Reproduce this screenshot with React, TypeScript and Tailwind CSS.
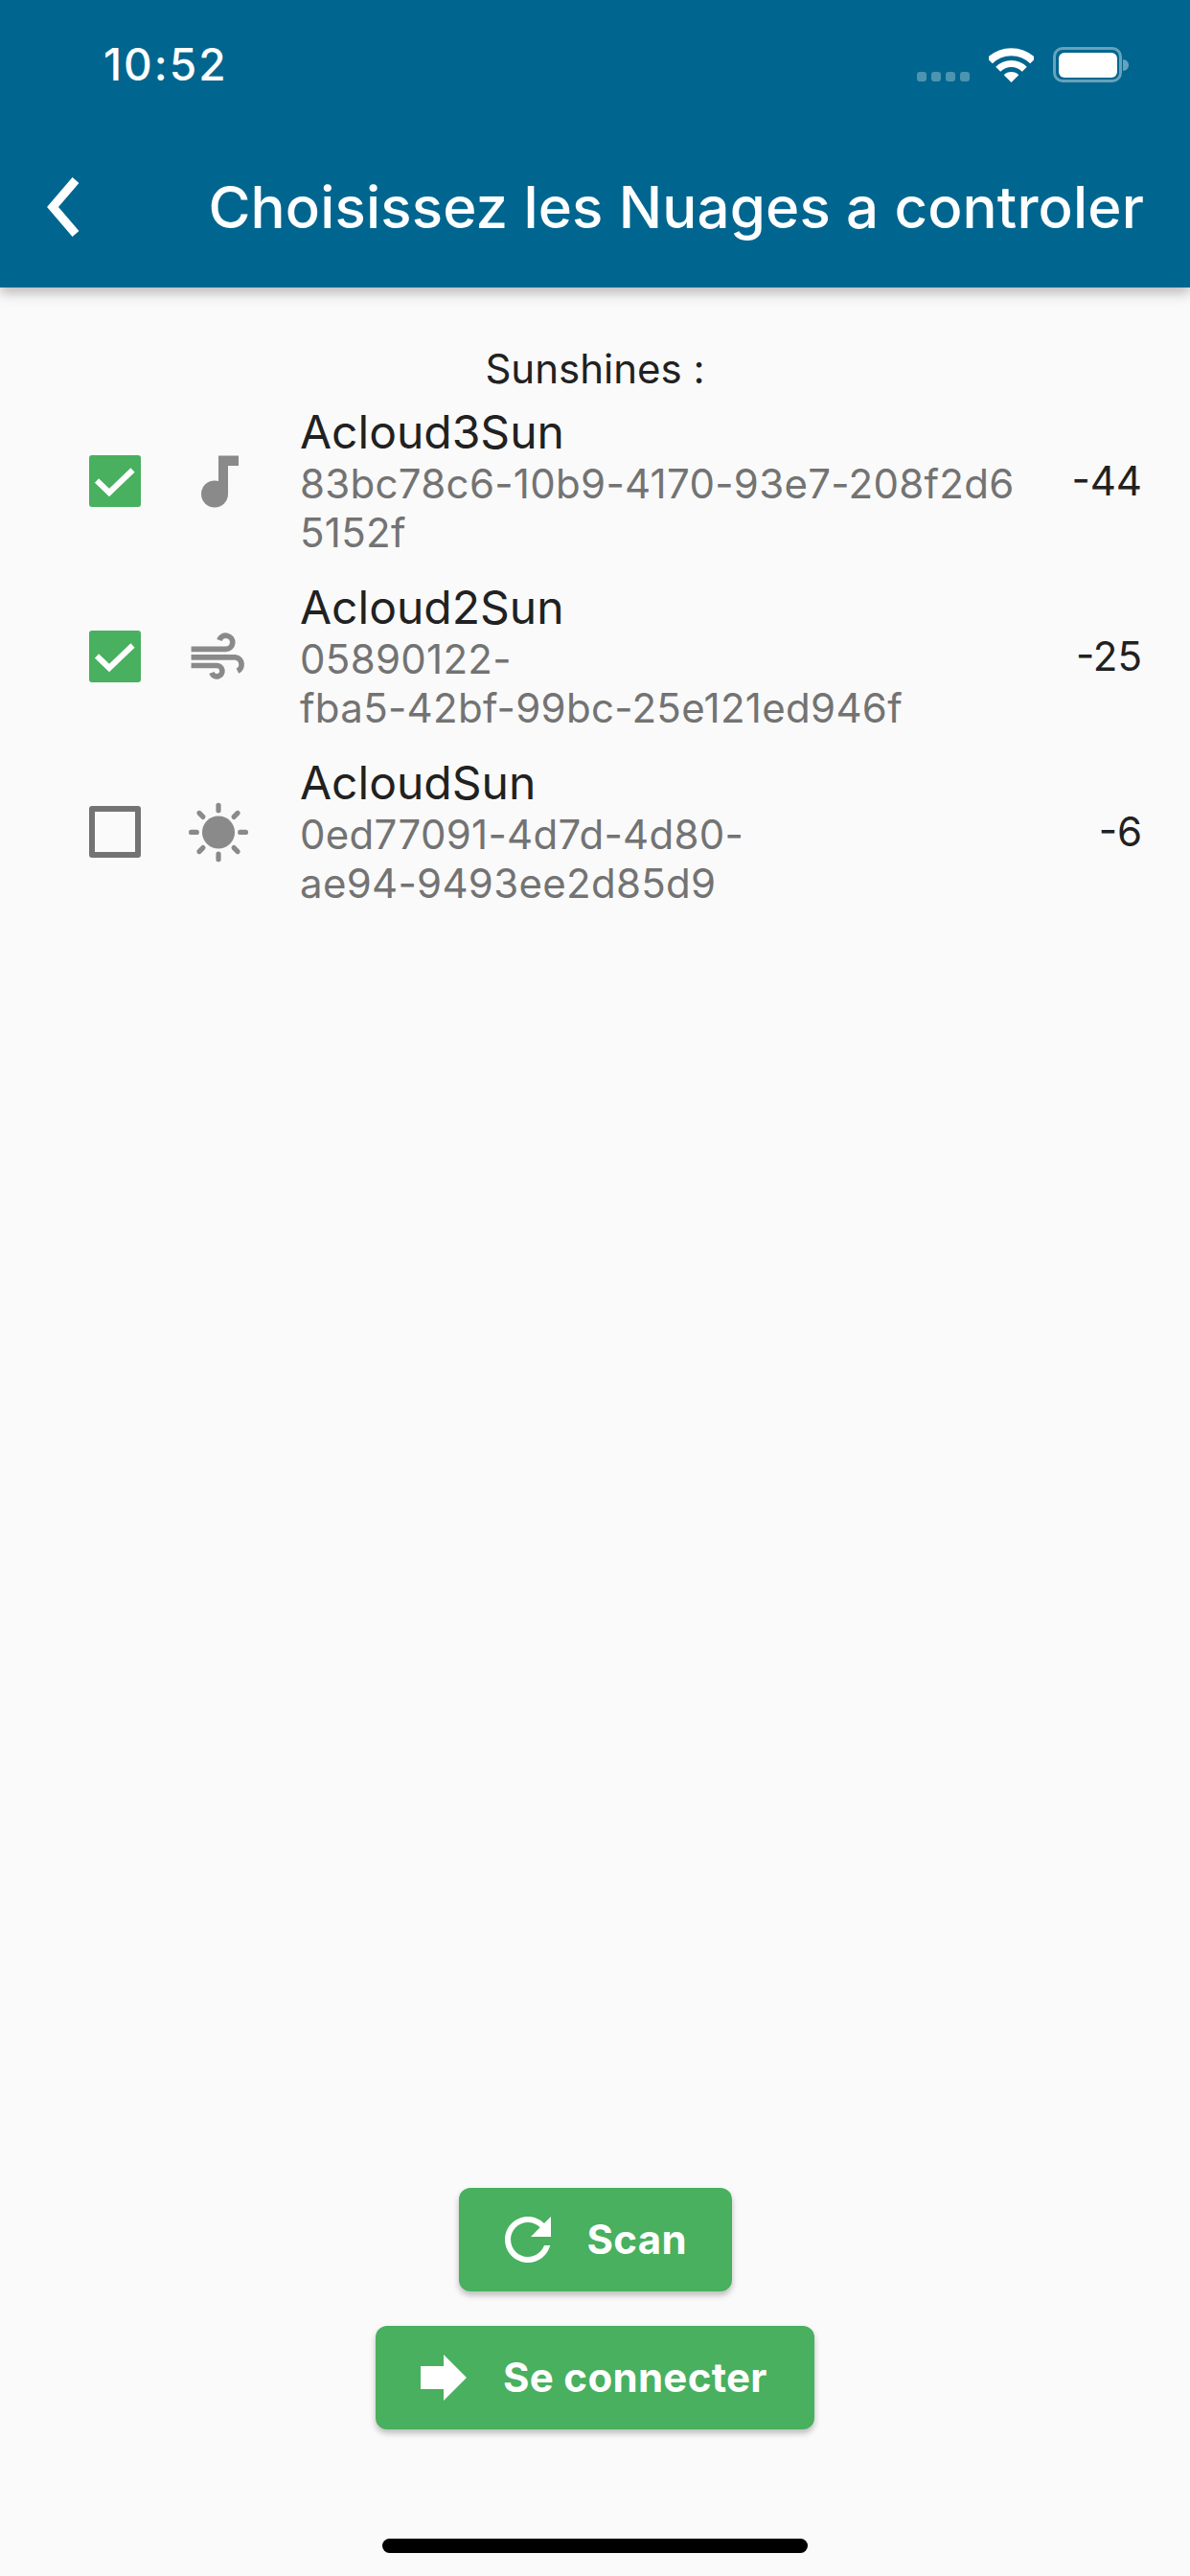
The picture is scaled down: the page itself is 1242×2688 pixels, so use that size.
import type { ReactNode } from "react";

const MusicIcon = () => (
  <svg viewBox="0 0 72 72" className="h-[72px] w-[72px] fill-[#8a8a8a]">
    <circle cx="32" cy="49.5" r="14" />
    <path d="M36 9.5H57V20H46V50H36Z" />
  </svg>
);

const WindIcon = () => (
  <svg viewBox="0 0 76 70" className="h-[70px] w-[76px] fill-none stroke-[#8a8a8a] stroke-[6]">
    <path d="M8 27 H46 A7.5 7.5 0 1 0 39 17" />
    <path d="M8 36 H57 A8 8 0 0 1 59 51" />
    <path d="M8 45 H36 A6 6 0 1 1 30.5 53" />
  </svg>
);

const SunIcon = () => (
  <svg viewBox="0 0 76 76" className="h-[76px] w-[76px] stroke-[#8a8a8a]">
    <circle cx="38" cy="38.5" r="18" fill="#8a8a8a" stroke="none" />
    <g strokeWidth="5.5" strokeLinecap="round">
      <path d="M38 8.7V14.5M38 62.5V68.3M8 38.5H14M62 38.5H68" />
      <path d="M16.8 17.3L21 21.5M55 55.5L59.2 59.7M59.2 17.3L55 21.5M21 55.5L16.8 59.7" />
    </g>
  </svg>
);

const sensors: { name: string; id: string[]; rssi: string; checked: boolean; icon: ReactNode }[] = [
  {
    name: "Acloud3Sun",
    id: ["83bc78c6-10b9-4170-93e7-208f2d6", "5152f"],
    rssi: "-44",
    checked: true,
    icon: <MusicIcon />,
  },
  {
    name: "Acloud2Sun",
    id: ["05890122-", "fba5-42bf-99bc-25e121ed946f"],
    rssi: "-25",
    checked: true,
    icon: <WindIcon />,
  },
  {
    name: "AcloudSun",
    id: ["0ed77091-4d7d-4d80-", "ae94-9493ee2d85d9"],
    rssi: "-6",
    checked: false,
    icon: <SunIcon />,
  },
];

function Checkbox({ checked }: { checked: boolean }) {
  if (!checked) {
    return <div className="h-[54px] w-[54px] shrink-0 rounded-[3px] border-[6px] border-[#737373]" />;
  }
  return (
    <div className="h-[54px] w-[54px] shrink-0 rounded-[3px] bg-[#48b05e]">
      <svg viewBox="0 0 54 54" className="h-[54px] w-[54px] fill-none stroke-white stroke-[6]">
        <path d="M8 26.5 L21 39 L45.5 15.5" />
      </svg>
    </div>
  );
}

function GreenButton({ icon, label, className }: { icon: ReactNode; label: string; className: string }) {
  return (
    <button
      className={`flex h-[108px] items-center rounded-[12px] bg-[#48b05e] text-[42px] font-bold tracking-[0.3px] text-white shadow-[0_4px_6px_rgba(0,0,0,0.25)] ${className}`}
    >
      {icon}
      <span className="mb-[2px]">{label}</span>
    </button>
  );
}

export default function App() {
  return (
    <div className="flex h-[2688px] w-[1242px] flex-col bg-[#fafafa] font-[family-name:Inter,sans-serif]">
      <header className="bg-[#00668f] text-white shadow-[0_6px_12px_rgba(0,0,0,0.25)]">
        <div className="flex h-[132px] items-start justify-between pl-[108px] pr-[64px] pt-[49px]">
          <span className="text-[46px] font-medium leading-[37px] tracking-[2px]">10:52</span>
          <div className="flex h-[37px] items-end">
            <div className="mb-[1px] flex gap-[5px]">
              <div className="h-[10px] w-[10px] rounded-[3px] bg-white/30" />
              <div className="h-[10px] w-[10px] rounded-[3px] bg-white/30" />
              <div className="h-[10px] w-[10px] rounded-[3px] bg-white/30" />
              <div className="h-[10px] w-[10px] rounded-[3px] bg-white/30" />
            </div>
            <svg viewBox="0 0 47 36" className="ml-[20px] h-[36px] w-[47px] fill-none stroke-white">
              <path d="M1 13.4 A32 32 0 0 1 46 13.4" strokeWidth="8" />
              <path d="M9.7 22.2 A19.5 19.5 0 0 1 37.3 22.2" strokeWidth="7" />
              <path d="M23.5 36 L15.7 28.2 A11 11 0 0 1 31.3 28.2 Z" fill="#ffffff" stroke="none" />
            </svg>
            <div className="ml-[20px] flex h-[37px] w-[72px] items-center justify-center rounded-[10px] border-[3px] border-white/40">
              <div className="h-[26px] w-[61px] rounded-[6px] bg-white" />
            </div>
            <div className="mb-[12px] ml-[1px] h-[12px] w-[6px] rounded-r-full bg-white/40" />
          </div>
        </div>
        <div className="flex h-[168px] items-center justify-between pr-[48px]">
          <svg viewBox="0 0 70 70" className="ml-[30px] h-[70px] w-[70px] fill-none stroke-white stroke-[9]">
            <path d="M49 7 L25 35 L49 63" />
          </svg>
          <h1 className="text-[60px] font-medium leading-[72px] tracking-[0.15px]">Choisissez les Nuages a controler</h1>
        </div>
      </header>

      <main className="flex flex-1 flex-col pt-[60px]">
        <p className="text-center text-[42px] leading-[50px] text-[#212121]">Sunshines :</p>
        <ul>
          {sensors.map((sensor) => (
            <li key={sensor.name} className="flex h-[183px] items-center pl-[93px] pr-[50px]">
              <Checkbox checked={sensor.checked} />
              <div className="ml-[45px] flex h-[72px] w-[72px] shrink-0 items-center justify-center">
                {sensor.icon}
              </div>
              <div className="ml-[49px] flex-1">
                <div className="text-[48px] leading-[56px] text-[#212121]">{sensor.name}</div>
                {sensor.id.map((line) => (
                  <div key={line} className="whitespace-nowrap text-[42px] leading-[51px] tracking-[0.3px] text-[#737373]">
                    {line}
                  </div>
                ))}
              </div>
              <span className="text-[42px] leading-[51px] text-[#212121]">{sensor.rssi}</span>
            </li>
          ))}
        </ul>

        <div className="mt-auto flex flex-col items-center gap-[36px]">
          <GreenButton
            label="Scan"
            className="w-[285px] pl-[36px]"
            icon={
              <svg viewBox="0 0 24 24" className="mr-[26px] h-[72px] w-[72px] fill-white">
                <path d="M17.65 6.35C16.2 4.9 14.21 4 12 4c-4.42 0-7.99 3.58-7.99 8s3.57 8 7.99 8c3.73 0 6.84-2.55 7.73-6h-2.08c-.82 2.33-3.04 4-5.65 4-3.31 0-6-2.69-6-6s2.69-6 6-6c1.66 0 3.14.69 4.22 1.78L13 11h7V4l-2.35 2.35z" />
              </svg>
            }
          />
          <GreenButton
            label="Se connecter"
            className="w-[458px] pl-[35px]"
            icon={
              <svg viewBox="0 0 24 24" className="mr-[26px] h-[72px] w-[72px] fill-white">
                <path d="M12 8V4l8 8-8 8v-4H4V8z" />
              </svg>
            }
          />
        </div>
        <div className="mx-auto mb-[24px] mt-[114px] h-[15px] w-[444px] rounded-full bg-black" />
      </main>
    </div>
  );
}
